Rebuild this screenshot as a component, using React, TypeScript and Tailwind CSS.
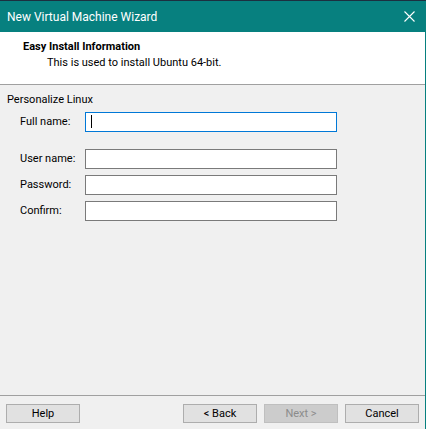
import React from 'react';

const font = { fontFamily: '"Segoe UI", Roboto, "Liberation Sans", sans-serif' };

type FieldProps = {
    label: string;
    focused?: boolean;
};

const Field = ({ label, focused }: FieldProps) => (
    <div className="flex items-center h-[20px]">
        <label className="w-[78px] shrink-0 pl-[13px] whitespace-nowrap">{label}</label>
        <div
            className={`relative w-[252px] h-[20px] bg-white border ${focused ? 'border-[#0078d7]' : 'border-[#7a7a7a]'}`}
        >
            {focused && <span className="absolute left-[5px] top-[2px] w-px h-[13px] bg-black"></span>}
        </div>
    </div>
);

const WizardButton = ({ children, disabled }: { children: React.ReactNode; disabled?: boolean }) => (
    <button
        disabled={disabled}
        className={`w-[74px] h-[19px] border flex items-center justify-center leading-none ${
            disabled
                ? 'bg-[#cccccc] border-[#bfbfbf] text-[#8b8b8b]'
                : 'bg-[#e1e1e1] border-[#adadad] text-black'
        }`}
    >
        {children}
    </button>
);

export default function App() {
    return (
        <div className="w-[426px] h-[429px] flex flex-col text-[11px] text-black bg-[#f0f0f0] overflow-hidden" style={font}>
            <div className="h-px bg-[#1c2f40]"></div>
            {/* title bar */}
            <div className="h-[31px] bg-[#07807f] flex items-center justify-between pl-[7px] pr-[10px] text-white text-[12px]">
                <span>New Virtual Machine Wizard</span>
                <svg width="11" height="11" viewBox="0 0 11 11" className="mr-[1px]">
                    <path d="M0.5 0.5 L10.5 10.5 M10.5 0.5 L0.5 10.5" stroke="white" strokeWidth="1.1" />
                </svg>
            </div>
            <div className="flex-1 flex flex-col border-r border-[#07807f]">
                {/* header */}
                <div className="h-[53px] bg-white border-b border-[#a0a0a0] pl-[23px] pt-[7px] leading-[15px]">
                    <div className="font-bold">Easy Install Information</div>
                    <div className="pl-[24px] mt-[1px]">This is used to install Ubuntu 64-bit.</div>
                </div>
                {/* body */}
                <div className="flex-1 pt-[7px] pl-[7px]">
                    <div className="leading-[15px]">Personalize Linux</div>
                    <div className="mt-[5px]">
                        <Field label="Full name:" focused />
                    </div>
                    <div className="mt-[17px] flex flex-col gap-[6px]">
                        <Field label="User name:" />
                        <Field label="Password:" />
                        <Field label="Confirm:" />
                    </div>
                </div>
                {/* footer */}
                <div className="h-[34px] border-t border-[#a0a0a0] flex items-start pt-[8px] pl-[6px]">
                    <WizardButton>Help</WizardButton>
                    <div className="ml-auto flex gap-[7px] pr-[6px]">
                        <WizardButton>&lt; Back</WizardButton>
                        <WizardButton disabled>Next &gt;</WizardButton>
                        <WizardButton>Cancel</WizardButton>
                    </div>
                </div>
            </div>
        </div>
    );
}
